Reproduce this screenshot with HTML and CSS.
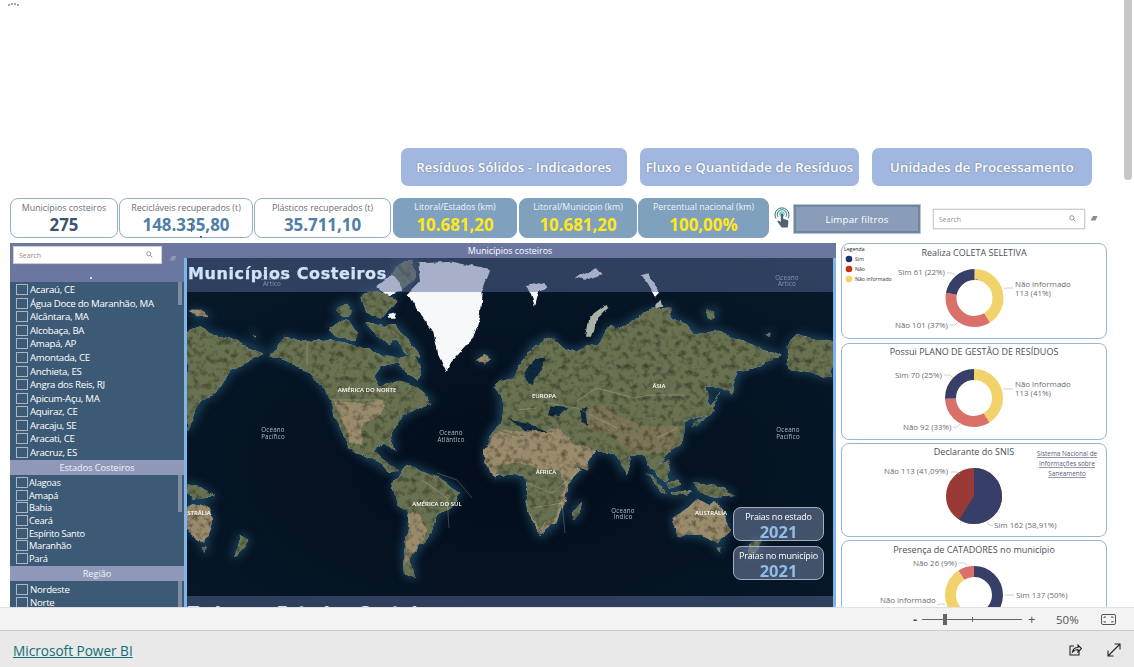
FILE: index.html
```html
<!DOCTYPE html>
<html lang="pt">
<head>
<meta charset="utf-8">
<title>Microsoft Power BI</title>
<link rel="stylesheet" href="styles.css">
</head>
<body>
<div class="page">
  <div class="report">
    <div class="canvas">
      <div class="loader"><i></i><i></i><i></i><i></i></div>
      <nav class="nav">
        <a class="nav-btn">Resíduos Sólidos - Indicadores</a>
        <a class="nav-btn">Fluxo e Quantidade de Resíduos</a>
        <a class="nav-btn">Unidades de Processamento</a>
      </nav>
      <section class="kpis">
        <div class="kpi kpi-w1"><span class="kpi-label">Municípios costeiros</span><b class="kpi-num dark">275</b></div>
        <div class="kpi kpi-w2"><span class="kpi-label">Recicláveis recuperados (t)</span><b class="kpi-num steel">148.335,80</b><i class="cursor-mark"></i></div>
        <div class="kpi kpi-w3"><span class="kpi-label">Plásticos recuperados (t)</span><b class="kpi-num steel">35.711,10</b></div>
        <div class="kpi blue kpi-w4"><span class="kpi-label">Litoral/Estados (km)</span><b class="kpi-num yellow">10.681,20</b></div>
        <div class="kpi blue kpi-w5"><span class="kpi-label">Litoral/Município (km)</span><b class="kpi-num yellow">10.681,20</b></div>
        <div class="kpi blue kpi-w6"><span class="kpi-label">Percentual nacional (km)</span><b class="kpi-num yellow">100,00%</b></div>
        <svg class="hand" viewBox="0 0 18 22" aria-hidden="true">
          <path d="M3 11.5a7 7 0 1 1 12 0" fill="none" stroke="#4a5e6e" stroke-width="1"/>
          <path d="M5.2 10a4.600 4.600 0 1 1 7.600 0" fill="none" stroke="#35b39b" stroke-width="1.2"/>
          <circle cx="9" cy="7" r="2.2" fill="none" stroke="#35b39b" stroke-width="1"/>
          <path d="M7.800 7.500a1.200 1.200 0 0 1 2.400 0v4.300l4 1.200c.9.3 1.300 1 1.200 1.900l-.6 5.600H8.600L4.600 15c-.6-.8.4-1.800 1.300-1.200l1.900 1.300z" fill="#53626f"/>
        </svg>
        <button class="clear-btn">Limpar filtros</button>
        <div class="search search-top">
          <span>Search</span>
          <svg class="glass" viewBox="0 0 8 8"><circle cx="3.2" cy="3.2" r="2.4"/><path d="M5 5l2.400 2.400"/></svg>
        </div>
        <svg class="eraser eraser-top" viewBox="0 0 8 6"><path d="M0.500 5.500L3 1h4.500L5.500 5.500z"/></svg>
      </section>

      <section class="main">
        <div class="center">
          <aside class="left">
            <div class="left-head">
              <div class="search search-left">
                <span>Search</span>
                <svg class="glass" viewBox="0 0 8 8"><circle cx="3.2" cy="3.2" r="2.4"/><path d="M5 5l2.400 2.400"/></svg>
              </div>
              <svg class="eraser" viewBox="0 0 8 6"><path d="M0.500 5.500L3 1h4.500L5.500 5.500z"/></svg>
              <i class="head-dot"></i>
            </div>
            <ul class="slicer s-mun">
              <li>Acaraú, CE</li><li>Água Doce do Maranhão, MA</li><li>Alcântara, MA</li><li>Alcobaça, BA</li><li>Amapá, AP</li><li>Amontada, CE</li><li>Anchieta, ES</li><li>Angra dos Reis, RJ</li><li>Apicum-Açu, MA</li><li>Aquiraz, CE</li><li>Aracaju, SE</li><li>Aracati, CE</li><li>Aracruz, ES</li>
            </ul>
            <h3 class="slicer-head">Estados Costeiros</h3>
            <ul class="slicer s-est">
              <li>Alagoas</li><li>Amapá</li><li>Bahia</li><li>Ceará</li><li>Espírito Santo</li><li>Maranhão</li><li>Pará</li>
            </ul>
            <h3 class="slicer-head">Região</h3>
            <ul class="slicer s-reg">
              <li>Nordeste</li><li>Norte</li>
            </ul>
          </aside>
          <div class="map-title">Municípios costeiros</div>
          <div class="map">
            <svg class="map-svg" viewBox="0 0 646 349" aria-hidden="true">
              <defs>
                <radialGradient id="sea" cx="50%" cy="60%" r="75%">
                  <stop offset="0" stop-color="#030d1b"/><stop offset="1" stop-color="#07192a"/>
                </radialGradient>
                <filter id="shelf" filterUnits="userSpaceOnUse" x="-10" y="-10" width="670" height="370" color-interpolation-filters="sRGB">
                  <feMorphology in="SourceAlpha" operator="dilate" radius="2"/>
                  <feGaussianBlur stdDeviation="4" result="b"/>
                  <feFlood flood-color="#1a3f57"/>
                  <feComposite in2="b" operator="in"/>
                </filter>
                <filter id="terrain" filterUnits="userSpaceOnUse" x="-10" y="-10" width="670" height="370" color-interpolation-filters="sRGB">
                  <feTurbulence type="fractalNoise" baseFrequency="0.05" numOctaves="3" seed="3" result="warp"/>
                  <feDisplacementMap in="SourceGraphic" in2="warp" scale="10" xChannelSelector="R" yChannelSelector="G" result="d"/>
                  <feTurbulence type="fractalNoise" baseFrequency="0.16" numOctaves="3" seed="7"/>
                  <feColorMatrix type="matrix" values="1 0 0 0 0.46  1 0 0 0 0.46  1 0 0 0 0.46  0 0 0 0 1" result="n"/>
                  <feBlend in="d" in2="n" mode="multiply" result="m"/>
                  <feComposite in="m" in2="d" operator="in"/>
                  <feGaussianBlur stdDeviation="0.6"/>
                </filter>
                <filter id="icy" filterUnits="userSpaceOnUse" x="-10" y="-10" width="670" height="370" color-interpolation-filters="sRGB">
                  <feTurbulence type="fractalNoise" baseFrequency="0.06" numOctaves="3" seed="11" result="warp"/>
                  <feDisplacementMap in="SourceGraphic" in2="warp" scale="7" xChannelSelector="R" yChannelSelector="G"/>
                  <feGaussianBlur stdDeviation="0.6"/>
                </filter>
                <g id="ice">
                  <g transform="translate(-2 -3) scale(.3333)">
                    <path class="ice" d="M575 95L620 60L640 85L650 110L610 120Z"/>
                    <path class="ice" d="M700 25L800 20L915 45L890 110L885 180L865 250L800 320L785 355L760 300L745 230L700 170L668 118L705 80Z"/>
                    <path class="ice" d="M603 177L630 172L625 188L607 188Z"/>
                  </g>
                  <g transform="translate(313 -3) scale(.3333)">
                    <path class="ice2" d="M255 245L265 190L320 150L325 155L285 195L270 245Z"/>
                    <path class="ice" d="M75 90L140 78L145 95L115 105L102 155L90 120Z"/>
                    <path class="ice" d="M228 70L290 38L308 60L260 78Z"/>
                    <path class="ice" d="M425 60L445 55L480 110L465 125Z"/>
                    <path class="ice2" d="M462 150L485 135L490 155L470 160Z"/>
                  </g>
                </g>
                <g id="land">
                  <g transform="translate(-2 -3) scale(.3333)">
                    <path class="green" d="M255 300L300 245L370 262L440 255L520 285L575 285L600 300L640 310L680 300L710 340L700 375L660 345L640 325L590 330L568 360L585 395L640 380L690 395L742 440L690 462L645 490L615 540L632 585L600 558L560 582L540 600L495 572L450 490L440 432L400 380L370 345L320 325Z"/>
                    <path class="tan" d="M450 440L590 440L590 480L545 500L530 560L495 560Z"/>
                    <path class="green" d="M5 235L40 220L130 250L240 290L205 310L135 350L105 400L50 440L30 480L5 530Z"/>
                    <path class="green" d="M440 215L490 195L520 240L500 262L450 240Z"/>
                    <path class="green" d="M450 160L490 140L505 170L475 190Z"/>
                    <path class="green" d="M540 205L590 205L640 250L610 270L580 240Z"/>
                    <path class="green" d="M595 215L635 210L690 280L705 305L665 300L620 250Z"/>
                    <path class="green" d="M530 120L580 110L630 130L590 185L545 170Z"/>
                    <path class="tan" d="M15 170L45 170L75 185L35 190Z"/>
                    <path class="tan" d="M200 238L212 236L210 244Z"/>
                    <path class="tan" d="M875 310L900 300L918 310L895 322Z"/>
                    <path class="green" d="M935 405L955 378L980 425L960 438Z"/>
                    <path class="green" d="M990 440L1030 470L1000 560L960 570L905 570L925 520L975 500Z"/>
                    <path class="green" d="M640 30L690 20L690 60L650 100L600 90Z"/>
                  </g>
                  <g transform="translate(313 -3) scale(.3333)">
                    <path class="green" d="M0 400L50 350L60 330L100 270L150 245L200 290L230 285L290 265L330 215L350 225L380 210L430 175L510 155L515 190L570 210L590 235L650 225L720 255L840 300L790 330L720 345L695 420L640 395L615 395L640 470L600 490L550 500L545 570L500 600L460 650L430 600L390 600L375 660L345 600L280 580L260 640L200 610L170 550L130 520L0 510Z"/>
                    <path class="tan2" d="M235 470L320 450L400 510L530 520L510 590L400 590L330 540L240 510Z"/>
                    <path class="tan" d="M0 530L170 550L200 610L260 640L285 585L220 560L170 520L60 520Z"/>
                    <path class="sea" d="M105 310L135 305L115 355L95 385L75 370Z"/>
                    <path class="sea" d="M150 460L205 465L180 490L145 480Z"/>
                    <path class="sea" d="M235 460L255 455L262 510L240 500Z"/>
                    <path class="sea" d="M30 490L90 505L170 535L140 525L70 520Z"/>
                    <path class="green" d="M860 280L900 240L1000 262L1000 370L920 350L870 340Z"/>
                    <path class="green" d="M625 470L650 430L660 410L640 460L600 510L570 520L610 490Z"/>
                    <path class="green" d="M615 170L645 165L650 185L625 190Z"/>
                    <path class="green" d="M800 238L812 236L808 246Z"/>
                  </g>
                  <g transform="translate(313 192) scale(.3333)">
                    <path class="tan" d="M-10 -50L60 -45L170 -40L190 0L245 55L205 105L195 150L170 220L120 258L90 195L70 80L30 70L-15 82L-45 35L-45 0Z"/>
                    <path class="green" d="M-10 75L70 80L90 190L120 240L170 200L195 110L180 65L60 48L0 50Z"/>
                    <path class="green" d="M220 180L242 152L238 190L222 210Z"/>
                    <path class="green" d="M440 70L470 95L505 135L480 125Z"/>
                    <path class="green" d="M495 100L535 85L540 110L510 118Z"/>
                    <path class="green" d="M515 130L580 130L560 138L520 138Z"/>
                    <path class="green" d="M575 100L640 105L700 135L650 140L600 130Z"/>
                    <path class="tan" d="M518 205L590 150L625 170L645 150L690 230L660 280L605 258L530 255Z"/>
                    <path class="green" d="M650 290L668 290L660 305Z"/>
                    <path class="green" d="M745 280L790 270L770 300L745 320Z"/>
                    <path class="green" d="M455 50L500 30L515 70L495 95L470 75Z"/>
                  </g>
                  <g transform="translate(-2 192) scale(.3333)">
                    <path class="tan" d="M5 170L25 150L60 165L85 215L60 275L5 240Z"/>
                    <path class="green" d="M5 105L30 105L90 145L40 140L5 130Z"/>
                    <path class="green" d="M50 285L68 285L58 305Z"/>
                    <path class="green" d="M165 255L190 270L170 300L145 322Z"/>
                    <path class="green" d="M520 -10L560 5L620 50L640 62L615 65L575 38L540 20Z"/>
                    <path class="green" d="M625 110L660 45L710 60L770 90L825 125L790 175L760 190L745 250L700 290L680 330L690 382L660 370L655 300L675 190L640 160Z"/>
                    <path class="tan" d="M672 190L700 195L725 250L700 285L680 325L662 340L660 300Z"/>
                  </g>
                </g>
              </defs>
              <rect width="646" height="349" fill="url(#sea)"/>
              <use href="#land" filter="url(#shelf)"/>
              <use href="#land" filter="url(#terrain)"/>
              <use href="#ice" filter="url(#icy)"/>
              <g class="borders">
                <path d="M120 84V112M145 142H195"/>
                <path d="M390 143L410 130L447 140L463 137L497 137M360 145L390 150L430 170M330 152L350 150M470 180L490 170"/>
                <path d="M250 215L270 222L285 240M235 222L260 240L262 270M340 225L365 235L390 215M345 250L375 245L378 275"/>
              </g>
              <text class="m-sea" x="85" y="22">Oceano</text><text class="m-sea" x="85" y="28">Ártico</text>
              <text class="m-sea" x="600" y="22">Oceano</text><text class="m-sea" x="600" y="28">Ártico</text>
              <text class="m-sea" x="86" y="174">Oceano</text><text class="m-sea" x="86" y="181">Pacífico</text>
              <text class="m-sea" x="601" y="174">Oceano</text><text class="m-sea" x="601" y="181">Pacífico</text>
              <text class="m-sea" x="264" y="177">Oceano</text><text class="m-sea" x="264" y="184">Atlântico</text>
              <text class="m-sea" x="436" y="255">Oceano</text><text class="m-sea" x="436" y="261">Índico</text>
              <text class="m-land" x="180" y="134">AMÉRICA DO NORTE</text>
              <text class="m-land" x="357" y="140">EUROPA</text>
              <text class="m-land" x="472" y="130">ÁSIA</text>
              <text class="m-land" x="359" y="216">ÁFRICA</text>
              <text class="m-land" x="250" y="248">AMÉRICA DO SUL</text>
              <text class="m-land" x="524" y="257">AUSTRÁLIA</text>
              <text class="m-land" x="12" y="257">STRÁLIA</text>
            </svg>
            <div class="band band-top"><span>Municípios Costeiros</span></div>
            <div class="band band-bottom"><span>Todos os Estados Costeiros</span></div>
            <div class="praias">
              <div class="praia"><span>Praias no estado</span><b>2021</b></div>
              <div class="praia"><span>Praias no município</span><b>2021</b></div>
            </div>
          </div>
        </div>

        <div class="charts">
          <article class="card c1">
            <svg viewBox="1 1 264 94">
              <text class="leg-t" x="3" y="8">Legenda</text>
              <circle cx="8" cy="16" r="3.3" fill="#1f3468"/><text class="leg" x="14" y="18">Sim</text>
              <circle cx="8" cy="26" r="3.3" fill="#c2350f"/><text class="leg" x="14" y="28">Não</text>
              <circle cx="8" cy="36" r="3.3" fill="#f2d36b"/><text class="leg" x="14" y="38">Não informado</text>
              <text class="c-title" x="133" y="13">Realiza COLETA SELETIVA</text>
              <g class="donut" transform="translate(133.500 55) rotate(-90)">
                <circle class="y" r="23.5" pathLength="100" stroke-dasharray="41 59"/>
                <circle class="r" r="23.5" pathLength="100" stroke-dasharray="37 63" stroke-dashoffset="-41"/>
                <circle class="b" r="23.5" pathLength="100" stroke-dasharray="22 78" stroke-dashoffset="-78"/>
              </g>
              <path class="lead" d="M106 30h5l3 2M163 46l2-1h7M109 82h5l3-3"/>
              <text class="lab" x="57" y="32">Sim 61 (22%)</text>
              <text class="lab" x="174" y="44">Não informado</text>
              <text class="lab" x="174" y="53">113 (41%)</text>
              <text class="lab" x="54" y="85">Não 101 (37%)</text>
            </svg>
          </article>
          <article class="card c2">
            <svg viewBox="1 1 264 95">
              <text class="c-title" x="133" y="12">Possui PLANO DE GESTÃO DE RESÍDUOS</text>
              <g class="donut" transform="translate(133 55) rotate(-90)">
                <circle class="y" r="23.5" pathLength="100" stroke-dasharray="41 59"/>
                <circle class="r" r="23.5" pathLength="100" stroke-dasharray="33.5 66.5" stroke-dashoffset="-41"/>
                <circle class="b" r="23.5" pathLength="100" stroke-dasharray="25.5 74.5" stroke-dashoffset="-74.5"/>
              </g>
              <path class="lead" d="M103 32h6l3 3M162 46h10M112 84h4l3-3"/>
              <text class="lab" x="54" y="35">Sim 70 (25%)</text>
              <text class="lab" x="174" y="44">Não informado</text>
              <text class="lab" x="174" y="53">113 (41%)</text>
              <text class="lab" x="62" y="87">Não 92 (33%)</text>
            </svg>
          </article>
          <article class="card c3">
            <svg viewBox="1 1 264 92">
              <text class="c-title" x="133" y="12">Declarante do SNIS</text>
              <g class="donut" transform="translate(133 53) rotate(-90)">
                <circle class="dr" r="14" pathLength="100" stroke-dasharray="100 0"/>
                <circle class="db" r="14" pathLength="100" stroke-dasharray="58.91 41.09"/>
              </g>
              <path class="lead" d="M110 29h6l3 2M146 79l2 3h4"/>
              <text class="lab" x="43" y="31">Não 113 (41,09%)</text>
              <text class="lab" x="153" y="85">Sim 162 (58,91%)</text>
              <text class="link" x="226" y="13">Sistema Nacional de</text>
              <text class="link" x="226" y="23">Informações sobre</text>
              <text class="link" x="226" y="33">Saneamento</text>
            </svg>
          </article>
          <article class="card c4">
            <svg viewBox="1 1 264 94">
              <text class="c-title" x="133" y="13">Presença de CATADORES no município</text>
              <g class="donut" transform="translate(133 55) rotate(-90)">
                <circle class="b" r="23.5" pathLength="100" stroke-dasharray="50 50"/>
                <circle class="y" r="23.5" pathLength="100" stroke-dasharray="41 59" stroke-dashoffset="-50"/>
                <circle class="r" r="23.5" pathLength="100" stroke-dasharray="9 91" stroke-dashoffset="-91"/>
              </g>
              <path class="lead" d="M126 26l-2-3h-7M164 55h9M96 65l4-1h4"/>
              <text class="lab" x="72" y="26">Não 26 (9%)</text>
              <text class="lab" x="175" y="58">Sim 137 (50%)</text>
              <text class="lab" x="39" y="63">Não informado</text>
              <text class="lab" x="58" y="72">113 (41%)</text>
            </svg>
          </article>
        </div>
      </section>
    </div>
    <div class="scrollbar"><i></i></div>
  </div>

  <div class="zoombar">
    <span class="z-minus">-</span>
    <div class="z-track"><i class="z-tick"></i><i class="z-thumb"></i></div>
    <span class="z-plus">+</span>
    <span class="z-pct">50%</span>
    <svg class="z-fit" viewBox="0 0 15 11"><rect x=".5" y=".5" width="14" height="10" rx="1.5"/><path d="M3 4V3h2M10 3h2v1M12 7v1h-2M5 8H3V7"/></svg>
  </div>
  <footer class="footer">
    <a class="pbi">Microsoft Power BI</a>
    <svg class="f-icon f-share" viewBox="0 0 14 14"><path d="M6 3H2v9h9V8"/><path d="M4.500 9c.5-3 2.500-4.500 5.500-4.500V2l3.500 3.500L10 9V6.500C8 6.500 6 7.500 4.500 9z"/></svg>
    <svg class="f-icon f-expand" viewBox="0 0 14 14"><path d="M1 13L13 1M7.500 1H13v5.500M1 7.500V13h5.500"/></svg>
  </footer>
</div>
</body>
</html>
```
FILE: styles.css
```css
* { box-sizing: border-box; }
html, body { margin: 0; height: 100%; overflow: hidden; background: #fff; }
body { font-family: "Open Sans", "Noto Sans", sans-serif; color: #444; }
ul, h3 { margin: 0; padding: 0; list-style: none; }
i { display: block; }

.page { width: 1134px; height: 667px; display: flex; flex-direction: column; }
.report { height: 607px; display: flex; overflow: hidden; position: relative; }
.canvas { width: 1124px; padding: 148px 0 0 10px; overflow: hidden; position: relative; }

.loader { position: absolute; left: 8px; top: 3px; display: flex; gap: 1px; align-items: flex-end; }
.loader i { width: 2px; height: 2px; background: #8a8a8a; border-radius: 50%; }
.loader i:nth-child(2), .loader i:nth-child(3) { margin-bottom: 1px; }

.scrollbar { width: 10px; background: #fff; }
.scrollbar i { width: 8px; height: 180px; background: #c6c6c6; border-radius: 0 0 4px 4px; }

/* nav */
.nav { display: grid; grid-template-columns: 226px 219px 220px; gap: 13px; padding-left: 391px; height: 38px; }
.nav-btn { display: flex; align-items: center; justify-content: center; background: #a1b7df; border-radius: 7px; color: #fff; font-size: 13px; font-weight: 600; letter-spacing: .22px; text-shadow: 0 0 2px #6a7a92; white-space: nowrap; }

/* kpis */
.kpis { display: flex; align-items: flex-start; height: 40px; margin-top: 12px; }
.kpi { height: 40px; display: flex; flex-direction: column; align-items: center; border-radius: 8px; border: 1px solid #97afc4; background: #fff; margin-right: 1px; padding-top: 2px; position: relative; }
.kpi-w1 { width: 108px; }
.kpi-w2 { width: 134px; }
.kpi-w3 { width: 137px; margin-right: 2px; }
.kpi-w4 { width: 124px; margin-right: 2px; }
.kpi-w5 { width: 118px; }
.kpi-w6 { width: 131px; margin-right: 4px; }
.kpi.blue { background: #7fa1bd; border-color: #7fa1bd; color: #fff; }
.kpi-label { font-size: 8.9px; line-height: 13px; color: #6a6f76; white-space: nowrap; }
.blue .kpi-label { color: #eef3f8; font-size: 8.8px; }
.kpi-num { font-size: 16.9px; line-height: 21px; font-weight: 700; white-space: nowrap; }
.dark { color: #3a5570; }
.steel { color: #4f7ea6; }
.yellow { color: #ffe81a; }
.cursor-mark { position: absolute; left: 71px; top: 24px; width: 1px; height: 9px; background: #5b6a78; }
.cursor-mark::after { content: ""; position: absolute; left: 9px; top: 13px; width: 2px; height: 2px; background: #5b6a78; }

.hand { width: 18px; height: 22px; margin-top: 9px; flex: none; }
.clear-btn { width: 126px; height: 28px; margin: 7px 0 0 3px; padding: 0; flex: none; background: #8a9db8; border: 2px solid #71859f; box-shadow: 0 0 0 1px #b5c3d6; color: #fff; font: 500 9.7px "Open Sans", sans-serif; letter-spacing: .2px; }

.search { position: relative; display: flex; align-items: center; background: #fff; border: 1px solid #cfcfcf; box-shadow: 0 0 1px #999; padding-left: 5px; flex: none; }
.search span { font-size: 7px; color: #9a8f8a; }
.glass { position: absolute; right: 8px; top: 50%; width: 7px; height: 7px; margin-top: -4px; fill: none; stroke: #8a8a8a; stroke-width: 1; }
.search-top { width: 152px; height: 20px; margin: 11px 0 0 13px; }
.eraser { width: 8px; height: 6px; fill: #8c8c8c; flex: none; }
.eraser-top { margin: 17px 0 0 5px; }

/* main */
.main { display: grid; grid-template-columns: 826px 266px; column-gap: 5px; margin-top: 5px; }
.center { display: grid; grid-template-columns: 174px 652px; grid-template-rows: 15px 349px; height: 364px; }

.left { grid-row: 1 / 3; background: #3c5a75; height: 364px; overflow: hidden; }
.left-head { height: 39px; background: #6b76a1; display: flex; align-items: flex-start; padding: 3px 0 0 3px; position: relative; }
.search-left { width: 149px; height: 18px; }
.left-head .eraser { margin: 9px 0 0 7px; fill: #9097b6; }
.head-dot { position: absolute; left: 80px; top: 34px; width: 2px; height: 2px; background: #d6e4f2; }

.slicer { position: relative; color: #fff; font-size: 9.7px; overflow: hidden; }
.slicer li { position: relative; display: flex; align-items: center; white-space: nowrap; padding-left: 20px; letter-spacing: -.3px; }
.slicer li::before { content: ""; position: absolute; left: 6px; width: 10px; height: 9px; border: 1px solid #aab6c2; }
.slicer::after { content: ""; position: absolute; right: 2px; width: 4px; background: #7f8d9d; top: 0; }
.s-mun { height: 178px; padding-top: 1px; }
.s-mun li { height: 13.55px; }
.s-mun::after { height: 23px; }
.s-est { height: 91px; padding-top: 1.5px; }
.s-est li { height: 12.6px; padding-left: 19px; font-size: 9.3px; letter-spacing: -.3px; }
.s-est::after { height: 37px; }
.s-reg { height: 41px; padding-top: 1.5px; }
.s-reg li { height: 13.5px; }
.s-reg::after { height: 30px; }
.slicer-head { height: 15px; background: #8f98b9; color: #f2f4f8; font-size: 9.1px; font-weight: 400; line-height: 15px; text-align: center; }

.map-title { background: #6b76a1; color: #fff; font-size: 8.9px; line-height: 15px; text-align: center; }
.map { position: relative; overflow: hidden; border: solid #82b4e6; border-width: 0 3px; height: 349px; background: #04101f; }
.map-svg { display: block; width: 646px; height: 349px; }
.m-sea { font: 6.2px "Open Sans", sans-serif; fill: #aebdcc; text-anchor: middle; letter-spacing: .2px; }
.m-land { font: 600 6px "Open Sans", sans-serif; fill: #fff; text-anchor: middle; }
.green { fill: #687150; }
.tan { fill: #9a8b6b; }
.tan2 { fill: #7d7656; }
.ice { fill: #f6f8fa; }
.ice2 { fill: #aab2a8; }
.sea { fill: #0e2a40; }
.borders path { fill: none; stroke: #dfe5da; stroke-width: .5; opacity: .5; }

.band { position: absolute; left: 0; right: 0; background: rgba(88, 103, 150, .5); overflow: hidden; }
.band-top { top: 0; height: 34px; padding: 6px 0 0 1px; }
.band-bottom { bottom: 0; height: 11px; padding: 7px 0 0 1px; }
.band span { display: block; font: 700 16px/20px "DejaVu Sans", sans-serif; color: #cfe4f6; letter-spacing: .6px; white-space: nowrap; -webkit-text-stroke: .25px #cfe4f6; }

.praias { position: absolute; right: 9px; top: 249px; display: flex; flex-direction: column; gap: 5px; }
.praia { width: 91px; height: 34px; display: flex; flex-direction: column; align-items: center; border: 1px solid #a4aec0; border-radius: 8px; background: rgba(105, 120, 150, .62); padding-top: 2px; }
.praia span { font-size: 9px; line-height: 13px; color: #fff; white-space: nowrap; letter-spacing: -.2px; }
.praia b { font-size: 16.5px; line-height: 17px; font-weight: 700; color: #8fbde9; }

/* charts */
.charts { display: flex; flex-direction: column; gap: 3px; }
.card { width: 266px; flex: none; background: #fff; border: 1px solid #9ab6d2; border-radius: 8px; overflow: hidden; }
.card svg { display: block; width: 264px; height: 100%; }
.c1 { height: 96px; margin-bottom: 1px; }
.c2 { height: 97px; }
.c3 { height: 94px; }
.c4 { height: 96px; }
.c-title { font-size: 9px; fill: #4a4f57; text-anchor: middle; }
.lab { font-size: 7.9px; fill: #6a6e77; }
.leg-t { font-size: 5.2px; fill: #222; }
.leg { font-size: 5.2px; fill: #333; }
.link { font-size: 6.4px; fill: #585c80; text-anchor: middle; text-decoration: underline; }
.lead { fill: none; stroke: #bdbdbd; stroke-width: .7; }
.donut circle { fill: none; stroke-width: 11; }
.donut .y { stroke: #f2d36b; }
.donut .r { stroke: #d9706a; }
.donut .b { stroke: #373f69; }
.donut .dr, .donut .db { stroke-width: 28; }
.donut .dr { stroke: #993a36; }
.donut .db { stroke: #373f69; }

/* zoom bar */
.zoombar { height: 24px; display: flex; align-items: center; background: #f3f3f3; border-top: 1px solid #e0e0e0; border-bottom: 1px solid #cbcbcb; flex: none; padding-left: 913px; }
.z-minus { width: 9px; font-size: 13px; font-weight: 700; color: #555; line-height: 1; }
.z-track { width: 100px; height: 1px; background: #666; position: relative; }
.z-thumb { position: absolute; left: 21px; top: -5px; width: 4px; height: 11px; background: #666; }
.z-tick { position: absolute; left: 50px; top: -2px; width: 1px; height: 5px; background: #666; }
.z-plus { width: 34px; padding-left: 6px; font-size: 13px; color: #555; line-height: 1; }
.z-pct { width: 45px; font-size: 11.5px; color: #555; }
.z-fit { width: 15px; height: 11px; fill: none; stroke: #555; stroke-width: 1; }

/* footer */
.footer { height: 36px; background: #e9e9e9; display: flex; align-items: center; padding: 2px 0 0 13px; flex: none; }
.pbi { font-size: 13.6px; color: #0f6e76; text-decoration: underline; white-space: nowrap; width: 1055px; }
.f-icon { width: 14px; height: 14px; fill: none; stroke: #222; stroke-width: 1.1; flex: none; }
.f-expand { margin-left: 25px; }
```
